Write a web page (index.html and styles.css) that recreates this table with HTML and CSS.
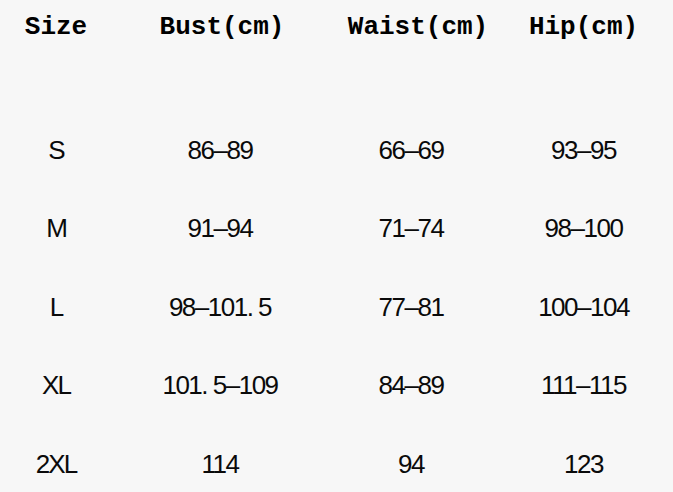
FILE: index.html
```html
<!DOCTYPE html>
<html lang="en">
<head>
<meta charset="utf-8">
<title>Size chart</title>
<link rel="stylesheet" href="styles.css">
</head>
<body>
<div class="chart">
  <div class="row head">
    <div class="cell">Size</div>
    <div class="cell bust-h">Bust(cm)</div>
    <div class="cell waist-h">Waist(cm)</div>
    <div class="cell">Hip(cm)</div>
  </div>
  <div class="body">
    <div class="row">
      <div class="cell size">S</div>
      <div class="cell">86–89</div>
      <div class="cell">66–69</div>
      <div class="cell">93–95</div>
    </div>
    <div class="row">
      <div class="cell size">M</div>
      <div class="cell">91–94</div>
      <div class="cell">71–74</div>
      <div class="cell">98–100</div>
    </div>
    <div class="row">
      <div class="cell size">L</div>
      <div class="cell">98–101. 5</div>
      <div class="cell">77–81</div>
      <div class="cell">100–104</div>
    </div>
    <div class="row">
      <div class="cell size">XL</div>
      <div class="cell">101. 5–109</div>
      <div class="cell">84–89</div>
      <div class="cell">111–115</div>
    </div>
    <div class="row">
      <div class="cell size">2XL</div>
      <div class="cell">114</div>
      <div class="cell">94</div>
      <div class="cell">123</div>
    </div>
  </div>
</div>
</body>
</html>
```

FILE: styles.css
```css
html, body {
  margin: 0;
  padding: 0;
  background: #f7f7f7;
}
.chart {
  width: 673px;
  height: 492px;
  color: #0a0a0a;
}
.row {
  display: grid;
  grid-template-columns: 112px 216px 166px 179px;
  align-items: center;
  height: 78.5px;
}
.cell {
  text-align: center;
  white-space: pre;
}
.head {
  height: 54px;
  font-family: "Liberation Mono", "DejaVu Sans Mono", monospace;
  font-weight: bold;
  font-size: 26px;
  color: #000;
}
.bust-h {
  padding-left: 4px;
}
.waist-h {
  padding-left: 14px;
}
.body {
  margin-top: 57px;
  font-family: "Liberation Sans", Arial, sans-serif;
  font-size: 26px;
  letter-spacing: -1.5px;
}
.size {
  letter-spacing: -2px;
}
```
